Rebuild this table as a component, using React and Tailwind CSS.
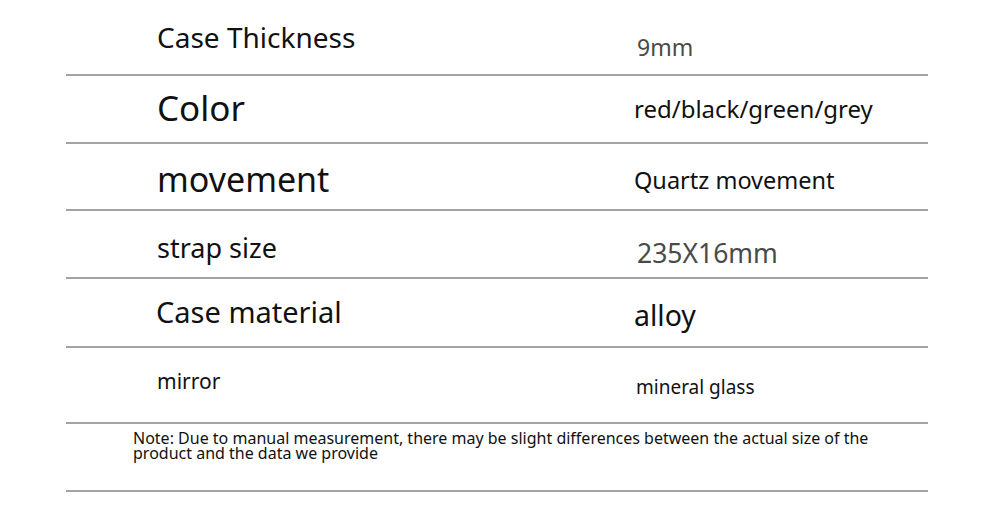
import React from "react";

export default function App() {
  return (
    <div
      className="w-[983px] h-[521px] bg-white overflow-hidden"
      style={{ fontFamily: '"Noto Sans", "Open Sans", sans-serif' }}
    >
      <div className="ml-[66px] w-[862px]">
        {/* Row 1 */}
        <div className="h-[76px] border-b-2 border-[#a3a3a3] flex">
          <div className="w-[568px] pl-[91px] pt-[23px]">
            <span className="block text-[28px] leading-none text-[#111]">Case Thickness</span>
          </div>
          <div className="pl-[3px] pt-[36px]">
            <span className="block text-[23px] leading-none text-[#4a4a4a]">9mm</span>
          </div>
        </div>
        {/* Row 2 */}
        <div className="h-[68px] border-b-2 border-[#a3a3a3] flex">
          <div className="w-[568px] pl-[91px] pt-[14px]">
            <span className="block text-[35px] leading-none text-[#111]">Color</span>
          </div>
          <div className="pt-[21px]">
            <span className="block text-[24px] leading-none text-[#111]">red/black/green/grey</span>
          </div>
        </div>
        {/* Row 3 */}
        <div className="h-[67px] border-b-2 border-[#a3a3a3] flex">
          <div className="w-[568px] pl-[91px] pt-[18px]">
            <span className="block text-[34px] leading-none text-[#111]">movement</span>
          </div>
          <div className="pt-[25px]">
            <span className="block text-[23.5px] leading-none text-[#111]">Quartz movement</span>
          </div>
        </div>
        {/* Row 4 */}
        <div className="h-[68px] border-b-2 border-[#a3a3a3] flex">
          <div className="w-[568px] pl-[91px] pt-[23px]">
            <span className="block text-[27px] leading-none text-[#111]">strap size</span>
          </div>
          <div className="pl-[3px] pt-[29px]">
            <span className="block text-[26.5px] leading-none text-[#4a4a4a]">235X16mm</span>
          </div>
        </div>
        {/* Row 5 */}
        <div className="h-[69px] border-b-2 border-[#a3a3a3] flex">
          <div className="w-[568px] pl-[90px] pt-[18px]">
            <span className="block text-[29px] leading-none text-[#111]">Case material</span>
          </div>
          <div className="pt-[22px]">
            <span className="block text-[28.5px] leading-none text-[#111]">alloy</span>
          </div>
        </div>
        {/* Row 6 */}
        <div className="h-[76px] border-b-2 border-[#a3a3a3] flex">
          <div className="w-[568px] pl-[91px] pt-[23px]">
            <span className="block text-[21px] leading-none text-[#111]">mirror</span>
          </div>
          <div className="pl-[2px] pt-[30px]">
            <span className="block text-[19px] leading-none text-[#111]">mineral glass</span>
          </div>
        </div>
        {/* Note */}
        <div className="h-[68px] border-b-2 border-[#a3a3a3] pl-[67px] pt-[7px]">
          <p className="text-[16px] leading-[15px] text-[#111] whitespace-nowrap">
            Note: Due to manual measurement, there may be slight differences between the actual size of the
            <br />
            product and the data we provide
          </p>
        </div>
      </div>
    </div>
  );
}
